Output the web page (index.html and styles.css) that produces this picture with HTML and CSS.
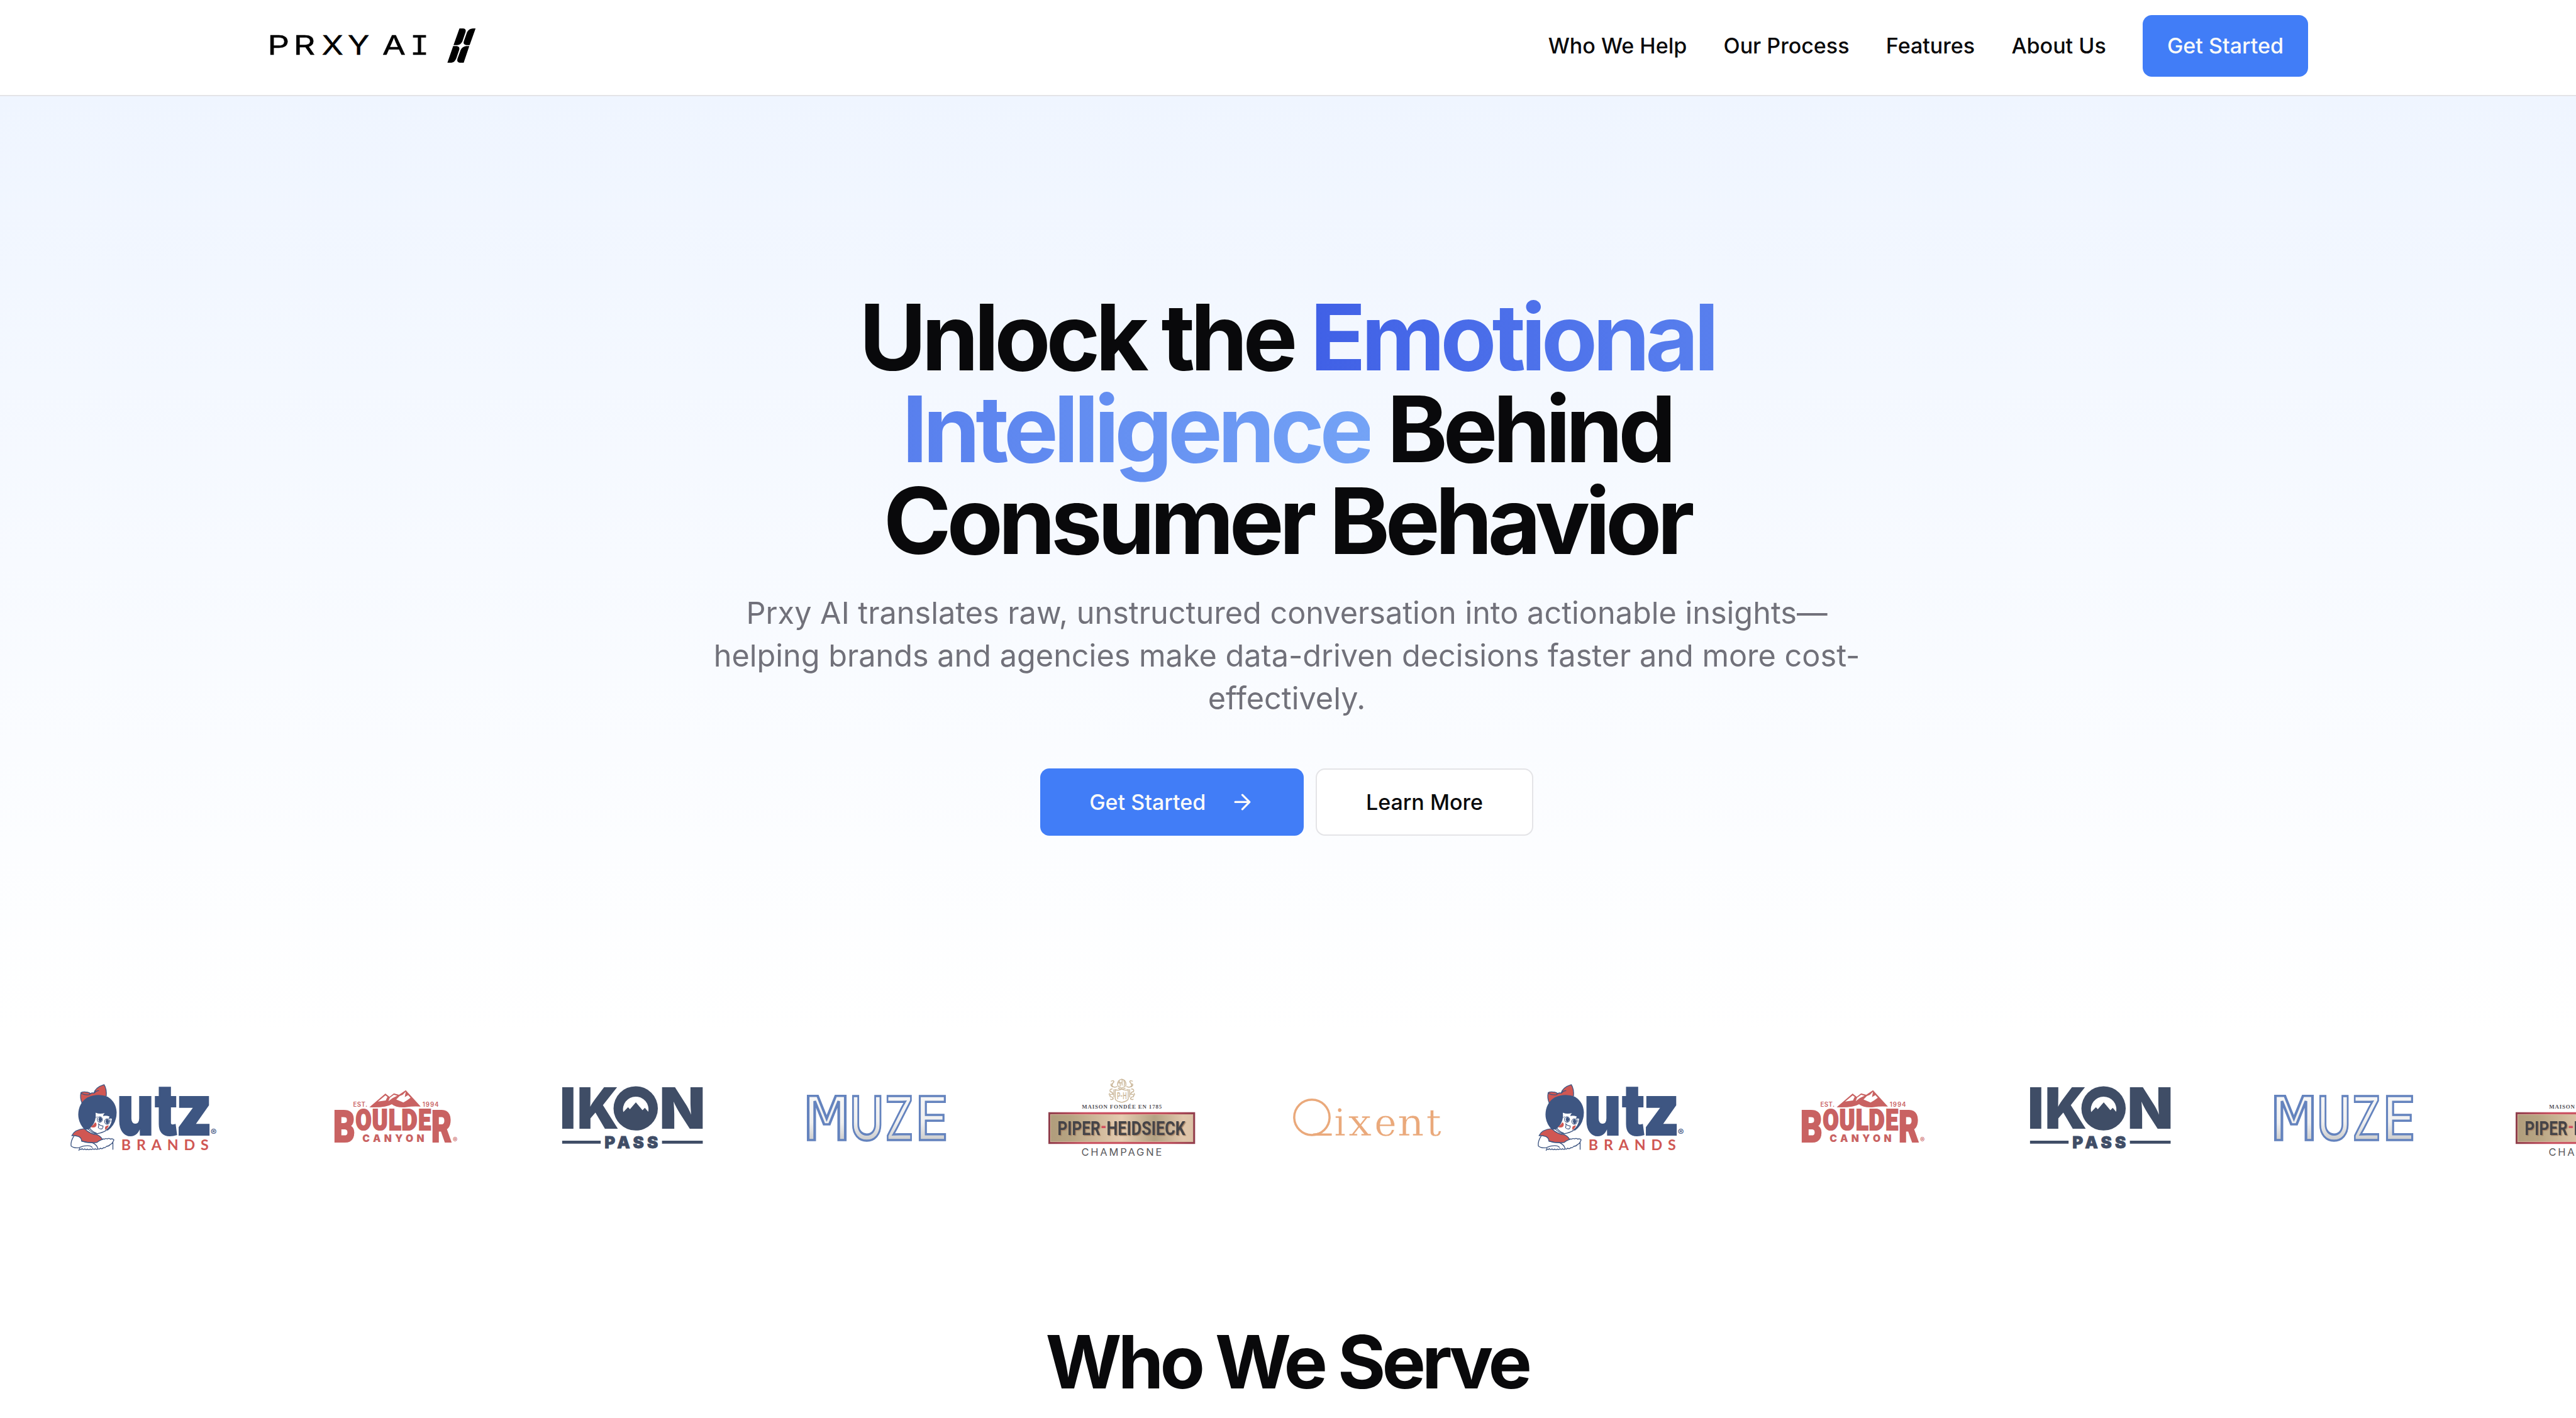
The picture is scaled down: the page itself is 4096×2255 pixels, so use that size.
FILE: index.html
```html
<!DOCTYPE html>
<html lang="en">
<head>
<meta charset="utf-8">
<title>Prxy AI</title>
<link rel="stylesheet" href="styles.css">
</head>
<body>
<header class="header">
  <div class="container header-row">
    <svg class="brand" viewBox="66 120 1260 300" role="img" aria-label="Prxy AI">
      <g class="f-inter" font-size="158" font-weight="400" stroke="#000" stroke-width="1.5">
        <text transform="translate(74 325) scale(1.28 1)">P</text>
        <text transform="translate(227 325) scale(1.27 1)">R</text>
        <text transform="translate(394 325) scale(1.19 1)">X</text>
        <text transform="translate(546 325) scale(1.2 1)">Y</text>
        <text transform="translate(750 325) scale(1.27 1)">A</text>
      </g>
      <text class="f-mono" transform="translate(914 325) scale(1.08 1)" font-size="172" stroke="#000" stroke-width="1.5">I</text>
      <path d="M1205 169H1228Q1246 171 1241 190L1222 246Q1212 267 1192 267H1170ZM1300 169L1265 267H1246Q1224 264 1231 244L1250 190Q1262 170 1284 169ZM1168 273H1190Q1208 276 1204 294L1187 344Q1178 368 1158 371H1134ZM1263 273L1230 371H1206Q1188 368 1193 348L1212 296Q1222 276 1244 273Z"/>
    </svg>
    <nav class="nav">
      <a>Who We Help</a>
      <a>Our Process</a>
      <a>Features</a>
      <a>About Us</a>
      <a class="btn btn-primary btn-nav">Get Started</a>
    </nav>
  </div>
</header>

<main>
  <section class="hero">
    <h1 class="hero-title">Unlock the <span class="accent">Emotional Intelligence</span> Behind Consumer Behavior</h1>
    <p class="hero-text">Prxy AI translates raw, unstructured conversation into actionable insights—helping brands and agencies make data-driven decisions faster and more cost-effectively.</p>
    <div class="hero-actions">
      <a class="btn btn-primary btn-lg">Get Started
        <svg class="arrow" viewBox="0 0 24 24"><path d="M5 12h14M12 5l7 7-7 7"/></svg>
      </a>
      <a class="btn btn-outline btn-lg">Learn More</a>
    </div>
  </section>

  <section class="brands" id="brands">
    <svg viewBox="84 39 864 480" role="img" aria-label="Utz Brands">
      <g stroke="#3e5682" stroke-width="5" stroke-linejoin="round" stroke-linecap="round">
        <path fill="#d05753" d="M152 194Q139 165 146 134Q158 126 185 131Q197 134 202 140Q212 132 222 137Q232 102 282 87Q298 112 295 154L240 162Z"/>
        <path fill="none" d="M148 138Q170 150 194 146L202 140M222 137Q232 124 250 122M222 137L232 130"/>
        <path fill="#fff" stroke="none" d="M232 250L330 280Q330 330 294 362Q250 384 214 362L186 340Z"/>
        <path fill="#d05753" d="M92 387Q110 350 166 346Q204 380 240 381Q262 390 272 409Q250 418 240 427Q200 432 150 419Q150 400 132 392Q110 384 92 387Z"/>
        <path fill="none" d="M104 390Q84 420 88 448Q104 462 134 458Q160 446 184 446Q204 446 212 456M150 419Q180 430 212 428Q240 440 245 462M186 346Q210 372 238 376Q272 370 292 358M196 342Q210 362 236 372"/>
        <path fill="none" d="M134 474L138 463Q146 474 152 463Q160 474 168 465Q176 474 184 466Q192 474 200 466Q208 472 216 464Q224 472 230 464Q240 472 246 464Q254 470 260 461Q272 468 278 458Q290 460 296 450Q310 450 318 440Q328 436 334 424L334 468M334 424L340 412Q330 402 320 408Q310 400 302 406Q290 402 284 408Q276 404 272 410"/>
      </g>
      <path fill="#3e5682" d="M167 351Q130 312 130 262Q132 194 184 162Q246 134 304 158Q354 190 356 250Q356 318 304 357L288 357Q326 330 328 287Q318 284 308 290Q312 280 314 274Q290 266 276 272Q276 262 286 254Q258 262 232 252Q236 290 222 314Q206 340 190 351Z"/>
      <path fill="#d05753" d="M230 308Q240 314 237 327Q232 341 216 339Q206 338 205 334Q222 322 230 308ZM290 354Q286 346 288 337Q294 326 310 327Q304 345 290 354Z"/>
      <g fill="#fff" stroke="#3e5682" stroke-width="4">
        <ellipse cx="257" cy="292" rx="15" ry="16"/><ellipse cx="300" cy="304" rx="15" ry="16"/>
        <path d="M250 318Q252 330 248 340Q256 350 270 347Q278 338 276 330Q262 332 250 318Z"/>
      </g>
      <path fill="#3e5682" d="M255 277Q270 280 270 293Q266 306 256 306Q249 300 249 290ZM297 289Q312 294 312 305Q308 318 298 318Q291 312 291 300Z"/>
      <path stroke="#3e5682" stroke-width="3" d="M240 283l-7-5M243 278l-4-6M314 296l8-4M315 302l8-1"/>
      <g class="f-inter" fill="#3e5682" stroke="#3e5682" stroke-width="8" font-weight="900" font-size="415">
        <text transform="translate(358 384) scale(.80 1)">u</text>
        <text transform="translate(581 384) scale(.80 1)">t</text>
        <text transform="translate(704 384) scale(.88 1)">z</text>
      </g>
      <text class="f-lato" x="383" y="473" font-size="86" font-weight="700" fill="#d05753" textLength="515">BRANDS</text>
      <text class="f-inter" x="909" y="387" font-size="54" font-weight="600" fill="#3e5682">®</text>
    </svg>

    <svg viewBox="-36 9 864 480" fill="#c96262" role="img" aria-label="Boulder Canyon">
      <path fill-rule="evenodd" d="M284 190L378 109L402 128L428 108L458 116L498 90L586 186Q540 182 500 190Q440 194 416 172Q380 194 284 190ZM334 156L380 150L390 128L378 120ZM396 154L420 136L448 122L428 116L404 134ZM442 144L484 162L504 150L526 134L512 118L492 130L498 98L480 116L462 124Z"/>
      <g class="f-head" stroke="#c96262" stroke-width="8">
        <text transform="translate(70 394) scale(.76 1)" font-size="264">B</text>
        <text transform="translate(203 325) scale(.80 1)" font-size="168">O</text>
        <text transform="translate(300 325) scale(.82 1)" font-size="168">U</text>
        <text transform="translate(397 325) scale(.80 1)" font-size="168">L</text>
        <text transform="translate(473 325) scale(.85 1)" font-size="168">D</text>
        <text transform="translate(572 325) scale(.78 1)" font-size="168">E</text>
        <text transform="translate(648 394) scale(.70 1)" font-size="264">R</text>
      </g>
      <text class="f-inter" x="243" y="396" font-size="58" font-weight="900" textLength="364">CANYON</text>
      <text class="f-inter" x="188" y="186" font-size="36" font-weight="600" textLength="84">EST.</text>
      <text class="f-inter" x="596" y="186" font-size="36" font-weight="600" textLength="96">1994</text>
      <text class="f-inter" x="775" y="397" font-size="41" font-weight="600">®</text>
    </svg>

    <svg viewBox="54 9 864 480" fill="#3f4d66" role="img" aria-label="Ikon Pass">
      <g class="f-inter" font-weight="900" font-size="334">
        <text transform="translate(57 318) scale(1 1)">I</text>
        <text transform="translate(159 318) scale(.98 1)">K</text>
        <text transform="translate(644 318) scale(1.06 1)">N</text>
      </g>
      <path fill-rule="evenodd" d="M505 66A130 130 0 1 1 505 327A130 130 0 1 1 505 66ZM432 218L460 190L471 202L506 161L545 207L559 193L579 216A75 75 0 1 0 432 218Z"/>
      <path d="M72 387H299V404H72ZM660 387H900V404H660Z"/>
      <text class="f-inter" x="322" y="430" font-size="96" font-weight="900" stroke="#3f4d66" stroke-width="3" textLength="314">PASS</text>
    </svg>

    <svg viewBox="54 -21 864 480" role="img" aria-label="Muze">
      <defs>
        <linearGradient id="sketch" x1="0" x2="0" y1="0" y2="1">
          <stop offset="0" stop-color="#fafafa"/><stop offset=".55" stop-color="#f0f0f0"/><stop offset="1" stop-color="#b0b0b0"/>
        </linearGradient>
      </defs>
      <g fill="url(#sketch)" stroke="#6483be" stroke-width="13">
        <text class="f-mono-wide" transform="translate(62 354) scale(1.18 1)" font-size="358">M</text>
        <text class="f-inter" transform="translate(322 354) scale(.78 1)" font-size="358" font-weight="500">U</text>
        <text class="f-inter" transform="translate(532 354) scale(.74 1)" font-size="358" font-weight="500">Z</text>
        <text class="f-inter" transform="translate(711 354) scale(.9 1)" font-size="358" font-weight="500">E</text>
      </g>
    </svg>

    <svg viewBox="54 39 864 480" role="img" aria-label="Piper-Heidsieck Champagne">
      <defs>
        <linearGradient id="gold" x1="0" x2="1" y1="0" y2="0">
          <stop offset="0" stop-color="#b09d7c"/><stop offset=".14" stop-color="#b7a482"/><stop offset=".5" stop-color="#e5cbb0"/>
          <stop offset=".73" stop-color="#b3a283"/><stop offset=".93" stop-color="#e0c6ab"/><stop offset="1" stop-color="#dcc2a6"/>
        </linearGradient>
        <linearGradient id="wine" x1="0" x2="1" y1="0" y2="0">
          <stop offset="0" stop-color="#8f3f4c"/><stop offset=".25" stop-color="#cb5463"/><stop offset=".5" stop-color="#cb5463"/>
          <stop offset=".6" stop-color="#c44f5f"/><stop offset=".8" stop-color="#c04e5d"/><stop offset="1" stop-color="#933f4d"/>
        </linearGradient>
      </defs>
      <g fill="none" stroke="#c9b597" stroke-width="5" stroke-linecap="round">
        <path d="M448 116Q468 124 486 112Q504 124 524 116V172Q518 184 486 191Q452 184 448 172Z"/>
        <path d="M462 90Q458 62 486 54Q514 58 510 92Q500 104 486 106Q468 104 462 90ZM470 64Q480 80 476 96M488 56V90M498 62Q504 78 500 92M466 76H484M466 108Q480 120 506 108"/>
        <path d="M424 66Q440 60 440 70Q430 78 428 92Q440 108 458 98M424 82Q418 92 432 100M430 112Q412 112 418 128Q434 130 434 144Q412 140 418 158Q432 156 436 170Q426 178 420 172M414 138Q408 148 418 150M440 116V160M549 66Q533 60 533 70Q543 78 545 92Q533 108 515 98M549 82Q555 92 541 100M543 112Q561 112 555 128Q539 130 539 144Q561 140 555 158Q541 156 537 170Q547 178 553 172M559 138Q565 148 555 150M533 116V160"/>
      </g>
      <text transform="translate(458 174) scale(.56 1)" class="f-inter" font-size="56" font-weight="600" fill="#cdb89b">P-H</text>
      <text class="f-serif" x="251" y="227" font-size="33" font-weight="700" fill="#55535a" textLength="470">MAISON FONDÉE EN 1785</text>
      <rect x="54" y="249" width="864" height="187" fill="url(#wine)"/>
      <rect x="67" y="263" width="838" height="160" fill="url(#gold)" stroke="#dcc8a8" stroke-width="3"/>
      <g class="f-cond">
        <text x="108" y="382" textLength="252" lengthAdjust="spacingAndGlyphs">PIPER</text>
        <text x="397" y="382" textLength="463" lengthAdjust="spacingAndGlyphs">HEIDSIECK</text>
      </g>
      <text class="f-dash" x="362" y="371" textLength="34" lengthAdjust="spacingAndGlyphs">-</text>
      <text class="f-inter" x="248" y="507" font-size="61" font-weight="400" fill="#59585c" textLength="474">CHAMPAGNE</text>
    </svg>

    <svg viewBox="54 -51 864 480" role="img" aria-label="Qixent">
      <g fill="none" stroke="#eaa97b" stroke-width="13">
        <circle cx="165" cy="189" r="104"/>
        <path d="M172 291Q196 291 212 284M180 291H282"/>
      </g>
      <g class="f-slab" fill="#eaa97b" stroke="#fff" stroke-width="2" font-size="222">
        <text transform="translate(297 297) scale(.95 1)">i</text>
        <text transform="translate(379 297) scale(1.1 1)">x</text>
        <text transform="translate(533 297)">e</text>
        <text transform="translate(669 297) scale(1.1 1)">n</text>
        <text transform="translate(838 297)">t</text>
      </g>
    </svg>
  </section>

  <section class="serve">
    <h2 class="serve-title">Who We Serve</h2>
  </section>
</main>
<script src="brands.js"></script>
</body>
</html>
```
FILE: brands.js
```js
// Repeat the logos so that the strip runs past the right edge of the window.
const strip = document.getElementById("brands");
[...strip.children].slice(0, 5).forEach((logo) => strip.append(logo.cloneNode(true)));
```
FILE: styles.css
```css
/* 1rem is ten layout pixels */
html {
  font-size: 24.304px;
}

*, *::before, *::after {
  box-sizing: border-box;
}

body {
  margin: 0;
  height: 100vh;
  overflow: hidden;
  background: #fff;
  color: #09090b;
  font-family: Inter, "Liberation Sans", sans-serif;
}

h1, h2, p {
  margin: 0;
}

/* Logo lettering */
.f-inter { font-family: Inter, sans-serif; }
.f-lato { font-family: Lato, sans-serif; }
.f-head { font-family: Roboto, sans-serif; font-weight: 900; }
.f-serif { font-family: "Liberation Serif", serif; }
.f-slab { font-family: "DejaVu Serif", serif; }
.f-mono { font-family: "Liberation Mono", monospace; }
.f-mono-wide { font-family: "DejaVu Sans Mono", monospace; }

.f-cond,
.f-dash {
  font-family: Roboto, sans-serif;
  font-size: 118px;
  font-weight: 700;
}

.f-cond {
  fill: #454448;
  filter: drop-shadow(5px 5px 0 #a58366);
}

.f-dash {
  fill: #d3505f;
}

/* Header */
.header {
  height: 6.3rem;
  border-bottom: 0.1rem solid #e4e4e7;
  background: #fff;
}

.container {
  width: 140rem;
  margin-left: 14.2rem;
  padding: 0 3.2rem;
}

.header-row {
  display: flex;
  align-items: center;
  justify-content: space-between;
  height: 6rem;
}

.brand {
  display: block;
  width: 14rem;
  height: 3.3333rem;
}

.nav {
  display: flex;
  align-items: center;
  gap: 2.4rem;
  font-size: 1.4rem;
  line-height: 2rem;
  font-weight: 500;
}

/* Buttons */
.btn {
  display: inline-flex;
  align-items: center;
  justify-content: center;
  border-radius: 0.6rem;
  font-size: 1.4rem;
  line-height: 2rem;
  font-weight: 500;
  white-space: nowrap;
}

.btn-primary {
  background: #417df7;
  color: #fafafa;
}

.btn-outline {
  border: 0.1rem solid #e4e4e7;
  background: #fff;
}

.btn-nav {
  height: 4rem;
  padding: 0 1.6rem;
}

.btn-lg {
  height: 4.4rem;
  padding: 0 3.2rem;
}

.arrow {
  width: 1.6rem;
  height: 1.6rem;
  margin-left: 1.6rem;
  fill: none;
  stroke: currentColor;
  stroke-width: 2;
  stroke-linecap: round;
  stroke-linejoin: round;
}

/* Hero */
.hero {
  display: flex;
  flex-direction: column;
  align-items: center;
  height: 61.2rem;
  padding: 12.8rem 0.16rem 0 0;
  background: linear-gradient(to bottom, #eff5ff, #fff);
  text-align: center;
}

.hero-title {
  width: 76.8rem;
  font-size: 6rem;
  line-height: 1;
  font-weight: 700;
  letter-spacing: -0.05em;
}

.accent {
  background: linear-gradient(to right, #4060e6, #74a3f6);
  -webkit-background-clip: text;
  background-clip: text;
  color: transparent;
}

.hero-text {
  width: 76.8rem;
  margin-top: 1.6rem;
  font-size: 2rem;
  line-height: 2.8rem;
  color: #71717a;
}

.hero-actions {
  display: flex;
  gap: 0.8rem;
  margin-top: 3.2rem;
}

/* Logo strip */
.brands {
  display: flex;
  gap: 6.4rem;
  height: 5.3333rem;
  margin-top: 2.9333rem;
  padding-left: 4.6rem;
  overflow: hidden;
}

.brands svg {
  flex: none;
  width: 9.6rem;
  height: 5.3333rem;
  overflow: visible;
}

/* Who we serve */
.serve {
  margin-top: 10.95rem;
  padding-right: 0.13rem;
  text-align: center;
}

.serve-title {
  font-size: 4.8rem;
  line-height: 1;
  font-weight: 700;
  letter-spacing: -0.05em;
}
```
